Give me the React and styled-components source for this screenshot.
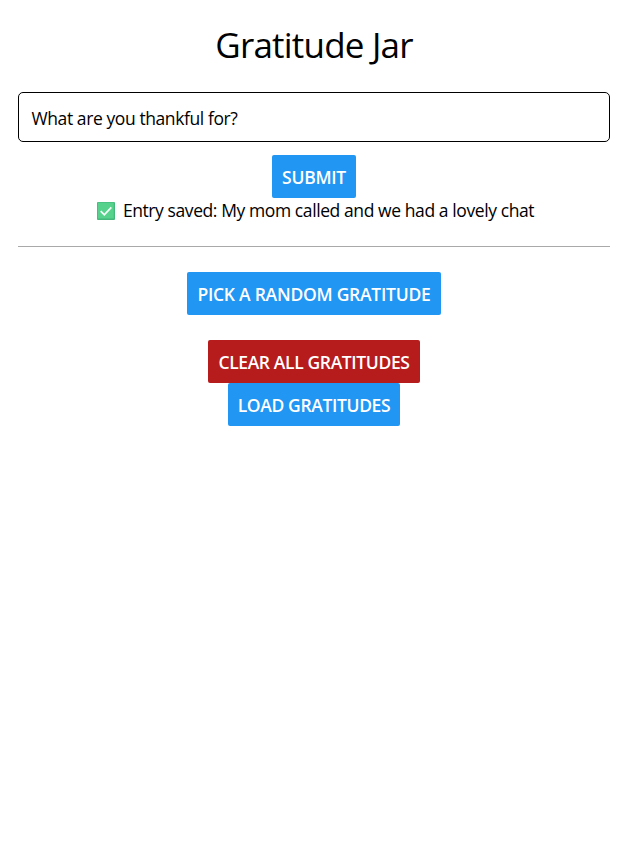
import React from 'react';
import styled, { createGlobalStyle } from 'styled-components';

const Global = createGlobalStyle`
  * { box-sizing: border-box; }
  body { margin: 0; background: #fff; color: #000; font-family: "Open Sans", "Noto Sans", sans-serif; }
`;
const Page = styled.main`
  display: flex; flex-direction: column; align-items: center; padding: 18px 20px 0 18px;
`;
const Title = styled.h1`
  margin: 0; height: 74px; line-height: 54px; font-size: 35px; font-weight: 400;
  letter-spacing: -0.8px; white-space: nowrap;
`;
const Field = styled.div`
  width: 100%; height: 50px; border: 1px solid #000; border-radius: 5px; padding: 0 12.5px;
  line-height: 51px; font-size: 17.5px; letter-spacing: -0.41px;
`;
const Button = styled.button`
  border: 0; border-radius: 2px; height: 43px; padding: 0; width: ${p => p.$w}px;
  margin: ${p => p.$top || 0}px 0 0; color: #fff; background: ${p => p.$danger ? '#b71c1c' : '#2196f3'};
  font: 600 17.5px/45px "Open Sans", "Noto Sans", sans-serif;
  letter-spacing: ${p => p.$tracking || -0.28}px; white-space: nowrap;
`;
const Status = styled.div`
  display: flex; align-items: center; gap: 8px; height: 26px; padding-left: 3px;
  font-size: 17.5px; line-height: 24px; letter-spacing: -0.41px; white-space: nowrap;
`;
const StatusText = styled.span`
  height: 26px;
`;
const Divider = styled.hr`
  width: 100%; height: 1px; border: 0; margin: 22px 0 25px; background: #a9a9a9;
`;

function CheckIcon() {
  return (
    <svg width="18" height="18" viewBox="0 0 18 18" aria-hidden="true">
      <rect width="18" height="18" rx="1" fill="#43b87a" />
      <rect x="0.8" y="0.6" width="15.9" height="15.9" fill="#56d28d" />
      <path d="M3.7 9.2l3.6 3.6L14.3 5.4" fill="none" stroke="#f4fff8" strokeWidth="1.8" />
    </svg>
  );
}

export default function App() {
  return (
    <Page>
      <Global />
      <Title>Gratitude Jar</Title>
      <Field>What are you thankful for?</Field>
      <Button $w={84} $top={13}>SUBMIT</Button>
      <Status>
        <CheckIcon />
        <StatusText>Entry saved: My mom called and we had a lovely chat</StatusText>
      </Status>
      <Divider />
      <Button $w={254} $tracking={-0.25}>PICK A RANDOM GRATITUDE</Button>
      <Button $w={212} $top={25} $danger $tracking={-0.37}>CLEAR ALL GRATITUDES</Button>
      <Button $w={172} $tracking={-0.36}>LOAD GRATITUDES</Button>
    </Page>
  );
}
